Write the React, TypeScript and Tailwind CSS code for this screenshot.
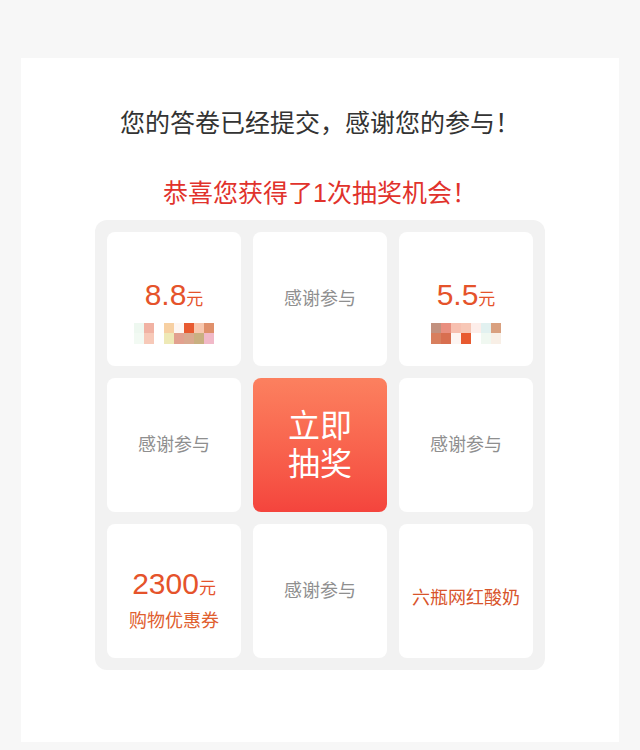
import React from 'react';

type Px = string | null;

// mosaic columns: [top, bottom]
const mosaicA: [Px, Px][] = [
  ['#eef8f0', '#f2faf3'],
  ['#f1b2a3', '#f7c9b8'],
  [null, null],
  ['#f7d0a2', '#eee9b6'],
  ['#fdf6f2', '#e2a18f'],
  ['#e85a30', '#d9a98f'],
  ['#f7c7ae', '#c9b081'],
  ['#e0906b', '#f1b9c8'],
];

const mosaicB: [Px, Px][] = [
  ['#c2917f', '#d87f5e'],
  ['#e98f7f', '#d86f50'],
  ['#f7c0b0', '#fdf5f2'],
  ['#f7c7b6', '#e85a30'],
  ['#fdeeea', null],
  ['#e2f1f0', '#f0f8f1'],
  ['#d9a07f', '#f8efe6'],
];

const Mosaic: React.FC<{ cols: [Px, Px][] }> = ({ cols }) => (
  <div className="flex mt-[7px] blur-[0.4px]">
    {cols.map((c, i) => (
      <div key={i} className="flex flex-col">
        <div className="w-[10px] h-[10px]" style={{ background: c[0] ?? 'transparent' }} />
        <div className="w-[10px] h-[11px]" style={{ background: c[1] ?? 'transparent' }} />
      </div>
    ))}
  </div>
);

const Cell: React.FC<{ children: React.ReactNode; className?: string }> = ({ children, className = '' }) => (
  <div className={`bg-white rounded-[8px] w-[134px] h-[134px] flex flex-col items-center ${className}`}>
    {children}
  </div>
);

const Thanks = () => (
  <Cell className="justify-center">
    <span className="text-[18px] leading-[24px] text-[#8f8f8f]">感谢参与</span>
  </Cell>
);

export default function App() {
  return (
    <div
      className="min-h-screen bg-[#f7f7f7] pt-[58px] px-[21px]"
      style={{ fontFamily: '"Liberation Sans", "Noto Sans CJK SC", sans-serif' }}
    >
      <div className="bg-white h-[684px] flex flex-col items-center">
        <h1 className="mt-[48px] text-[25px] leading-[34px] text-[#333333] font-normal">
          您的答卷已经提交，感谢您的参与！
        </h1>
        <p className="mt-[36px] text-[25px] leading-[34px] text-[#e1322c]">恭喜您获得了1次抽奖机会！</p>

        <div className="mt-[10px] w-[450px] bg-[#f2f2f2] rounded-[12px] p-[12px] grid grid-cols-3 gap-[12px]">
          <Cell className="pt-[47px]">
            <div className="text-[#e5532b] leading-[32px]">
              <span className="text-[30px]">8.8</span>
              <span className="text-[17px]">元</span>
            </div>
            <Mosaic cols={mosaicA} />
          </Cell>
          <Thanks />
          <Cell className="pt-[47px]">
            <div className="text-[#e5532b] leading-[32px]">
              <span className="text-[30px]">5.5</span>
              <span className="text-[17px]">元</span>
            </div>
            <Mosaic cols={mosaicB} />
          </Cell>

          <Thanks />
          <div className="w-[134px] h-[134px] rounded-[8px] bg-gradient-to-b from-[#fc805f] to-[#f4443d] flex flex-col items-center justify-center text-white text-[32px] leading-[38px]">
            <span>立即</span>
            <span>抽奖</span>
          </div>
          <Thanks />

          <Cell className="pt-[44px]">
            <div className="text-[#e5532b] leading-[32px]">
              <span className="text-[30px]">2300</span>
              <span className="text-[17px]">元</span>
            </div>
            <span className="mt-[4px] text-[18px] leading-[24px] text-[#e0602f]">购物优惠券</span>
          </Cell>
          <Thanks />
          <Cell className="justify-center pt-[14px]">
            <span className="text-[18px] leading-[24px] text-[#d8552c]">六瓶网红酸奶</span>
          </Cell>
        </div>
      </div>
    </div>
  );
}
